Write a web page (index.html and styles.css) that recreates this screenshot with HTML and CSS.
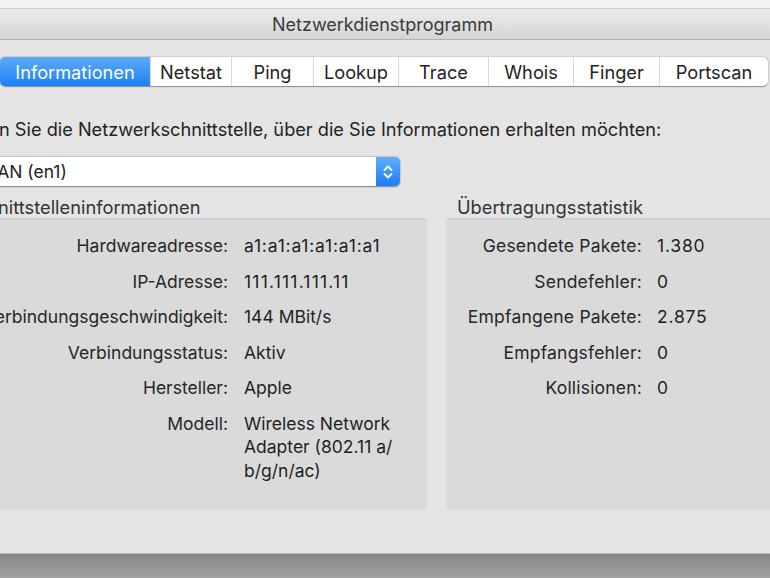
FILE: index.html
```html
<!DOCTYPE html>
<html lang="de">
<head>
<meta charset="utf-8">
<title>Netzwerkdienstprogramm</title>
<link rel="stylesheet" href="styles.css">
</head>
<body>
<div class="desk-top"></div>
<div class="window">
  <div class="titlebar">Netzwerkdienstprogramm</div>
  <div class="content">
    <div class="tabs-wrap">
      <div class="tabs">
        <div class="tab active">Informationen</div>
        <div class="tab">Netstat</div>
        <div class="tab">Ping</div>
        <div class="tab">Lookup</div>
        <div class="tab">Trace</div>
        <div class="tab">Whois</div>
        <div class="tab">Finger</div>
        <div class="tab">Portscan</div>
      </div>
    </div>
    <p class="prompt">Wählen Sie die Netzwerkschnittstelle, über die Sie Informationen erhalten möchten:</p>
    <div class="popup">
      <span class="popup-text">WLAN (en1)</span>
      <span class="stepper">
        <svg width="12" height="18" viewBox="0 0 12 18" aria-hidden="true">
          <path d="M2.5 7 L6 3.5 L9.5 7" fill="none" stroke="#fff" stroke-width="1.8" stroke-linecap="round" stroke-linejoin="round"/>
          <path d="M2.5 11 L6 14.5 L9.5 11" fill="none" stroke="#fff" stroke-width="1.8" stroke-linecap="round" stroke-linejoin="round"/>
        </svg>
      </span>
    </div>
    <div class="boxes">
      <section class="group group-left">
        <h2 class="group-title">Schnittstelleninformationen</h2>
        <div class="panel">
          <dl class="rows rows-left">
            <dt>Hardwareadresse:</dt><dd class="num">a1:a1:a1:a1:a1:a1</dd>
            <dt>IP-Adresse:</dt><dd class="num num-ones">111.111.111.11</dd>
            <dt>Verbindungsgeschwindigkeit:</dt><dd>144 MBit/s</dd>
            <dt>Verbindungsstatus:</dt><dd>Aktiv</dd>
            <dt>Hersteller:</dt><dd>Apple</dd>
            <dt>Modell:</dt><dd>Wireless Network<br>Adapter (802.11 a/<br>b/g/n/ac)</dd>
          </dl>
        </div>
      </section>
      <section class="group group-right">
        <h2 class="group-title">Übertragungsstatistik</h2>
        <div class="panel">
          <dl class="rows rows-right">
            <dt>Gesendete Pakete:</dt><dd class="num">1.380</dd>
            <dt>Sendefehler:</dt><dd>0</dd>
            <dt>Empfangene Pakete:</dt><dd class="num">2.875</dd>
            <dt>Empfangsfehler:</dt><dd>0</dd>
            <dt>Kollisionen:</dt><dd>0</dd>
          </dl>
        </div>
      </section>
    </div>
  </div>
</div>
<div class="desk-bottom"></div>
</body>
</html>
```
FILE: styles.css
```css
html, body {
  margin: 0;
  padding: 0;
}
body {
  width: 770px;
  height: 578px;
  overflow: hidden;
  background: #9a9a9a;
  font-family: "Inter", "Liberation Sans", sans-serif;
  color: #232323;
  -webkit-font-smoothing: antialiased;
}
.desk-top {
  height: 8px;
  background: #f3f3f3;
  border-bottom: 1px solid #d0d0d0;
}
.window {
  width: 904px;
  margin-left: -68px;
  height: 544px;
  background: #e4e4e4;
  display: flex;
  flex-direction: column;
  border-bottom: 1px solid #bdbdbd;
}
.titlebar {
  height: 30px;
  flex: none;
  background: linear-gradient(#ececec, #d5d5d5);
  border-bottom: 1px solid #b3b3b3;
  display: flex;
  align-items: center;
  padding-left: 340px;
  font-size: 18px;
  color: #3a3a3a;
}
.content {
  padding: 17px 20px 0 20px;
  display: flex;
  flex-direction: column;
}
.tabs-wrap {
  display: flex;
  padding-left: 48px;
}
.tabs {
  display: flex;
  height: 29px;
  background: #fff;
  border-radius: 5px;
  box-shadow: 0 0.5px 1px rgba(0,0,0,0.35), 0 0 0 0.5px rgba(0,0,0,0.12);
  overflow: hidden;
}
.tab {
  display: flex;
  align-items: center;
  justify-content: center;
  font-size: 18.2px;
  color: #222;
  border-left: 1px solid #d9d9d9;
  box-sizing: border-box;
}
.tab:first-child { border-left: none; }
.tab:nth-child(1) { width: 150px; }
.tab:nth-child(2) { width: 81px; }
.tab:nth-child(3) { width: 82px; }
.tab:nth-child(4) { width: 85px; }
.tab:nth-child(5) { width: 90px; }
.tab:nth-child(6) { width: 85px; }
.tab:nth-child(7) { width: 86px; }
.tab:nth-child(8) { width: 109px; }
.tab.active {
  background: linear-gradient(#5fabfb, #1b7ff6);
  color: #fff;
}
.prompt {
  margin: 31px 0 0 -6px;
  height: 24px;
  line-height: 24px;
  font-size: 18.2px;
}
.popup {
  margin-top: 16px;
  margin-left: 5px;
  width: 443px;
  height: 29px;
  box-sizing: border-box;
  background: #fff;
  border-radius: 5px;
  box-shadow: 0 0.5px 1.5px rgba(0,0,0,0.4), 0 0 0 0.5px rgba(0,0,0,0.12);
  display: flex;
  align-items: center;
  justify-content: space-between;
  overflow: hidden;
}
.popup-text {
  font-size: 17.5px;
  padding-left: 13px;
}
.stepper {
  width: 24px;
  height: 29px;
  background: linear-gradient(#62adfb, #1a7ef6);
  display: flex;
  align-items: center;
  justify-content: center;
}
.boxes {
  margin-top: 10px;
  margin-left: -3px;
  display: flex;
  gap: 19px;
}
.group {
  display: flex;
  flex-direction: column;
  flex: none;
}
.group-left { width: 478px; }
.group-right { width: 390px; }
.group-title {
  margin: 0 0 0 16px;
  font-weight: normal;
  font-size: 18.3px;
  line-height: 22px;
  color: #333;
}
.group-right .group-title { margin-left: 11px; }
.panel {
  height: 292px;
  background: #dadada;
  border-radius: 4px;
  border-top: 1px solid #cfcfcf;
  box-shadow: inset 0 1px 0 #d2d2d2;
  box-sizing: border-box;
  padding-top: 15px;
}
.rows {
  margin: 0;
  display: grid;
  row-gap: 12px;
  font-size: 17.5px;
  line-height: 23.5px;
  align-items: start;
}
.rows dt {
  text-align: right;
  white-space: nowrap;
  color: #262626;
}
.rows-right dt {
  letter-spacing: 0.2px;
}
.rows dd {
  margin: 0;
  color: #1f1f1f;
}
.rows dd.num {
  letter-spacing: 0.8px;
}
.rows dd.num-ones {
  letter-spacing: 1.2px;
}
.rows-left {
  grid-template-columns: 279px 1fr;
  column-gap: 16px;
}
.rows-right {
  grid-template-columns: 196px 1fr;
  column-gap: 15px;
}
.desk-bottom {
  height: 25px;
  background: linear-gradient(#878787, #a3a3a3);
}
```
